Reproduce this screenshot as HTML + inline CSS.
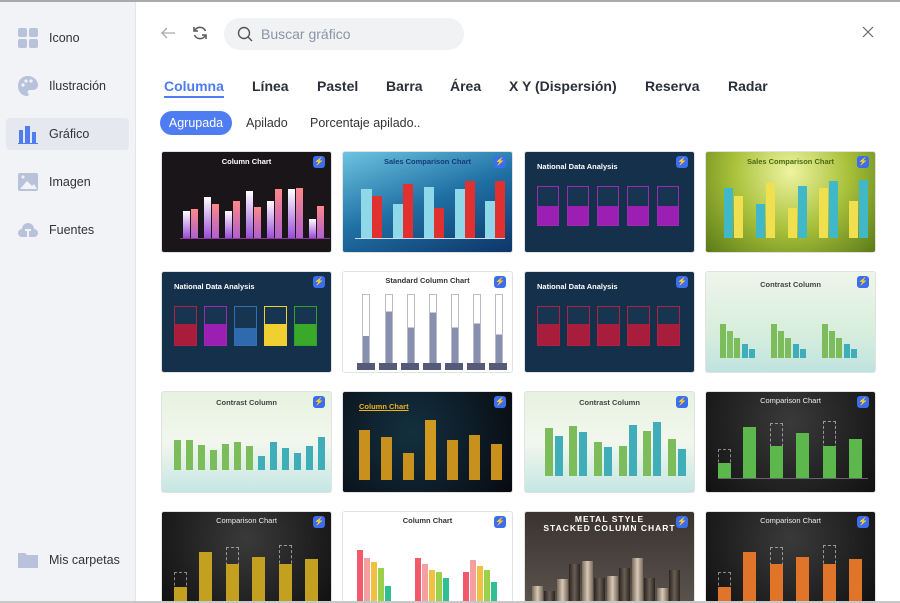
<!DOCTYPE html>
<html><head><meta charset="utf-8"><style>
*{margin:0;padding:0;box-sizing:border-box}
html,body{width:900px;height:603px;overflow:hidden}
body{background:#fff;font-family:"Liberation Sans",sans-serif;position:relative}
.top{position:absolute;left:0;top:0;width:900px;height:2px;background:#a9a9a9}
.side{position:absolute;left:0;top:2px;width:136px;height:601px;background:#f2f3f7;border-right:1px solid #e4e5ea}
.nav{position:absolute;left:6px;width:123px;height:32px;border-radius:4px;font-size:12.5px;color:#333;line-height:32px;padding-left:43px}
.nav.act{background:#e6e8ef}
.nav svg{position:absolute;left:12px;top:6px}
.tab{position:absolute;top:78px;font-size:14px;font-weight:bold;color:#2b2f3a}
.sub{position:absolute;top:111px;height:24px;line-height:24px;font-size:12.5px;color:#333}
.c{position:absolute;width:171px;height:102px;border-radius:3px;overflow:hidden;border:1px solid #e2e2e2}
.c i{position:absolute;display:block}
.t{position:absolute;left:0;width:100%;text-align:center;font-size:7.5px;font-weight:bold}
.bd{position:absolute;right:6px;top:4px;width:12px;height:12px;border-radius:3px;background:#3a6df0;color:#fff;font-size:8px;text-align:center;line-height:12px}
.r4{height:92px}
</style></head><body>
<div class="top"></div>
<div class="side">
 <div class="nav" style="top:20px"><svg width="20" height="20"><rect x="0" y="0" width="9" height="9" rx="2" fill="#b8c3db"/><rect x="11" y="0" width="9" height="9" rx="2" fill="#b8c3db"/><rect x="0" y="11" width="9" height="9" rx="2" fill="#b8c3db"/><rect x="11" y="11" width="9" height="9" rx="2" fill="#b8c3db"/></svg>Icono</div>
 <div class="nav" style="top:68px"><svg width="20" height="20"><path d="M10 0C4 0 0 4 0 10s4 10 9 10c2 0 2-2 1-3s0-3 2-3h3c3 0 5-2 5-5C20 4 15 0 10 0z" fill="#b8c3db"/><circle cx="5" cy="9" r="1.6" fill="#f2f3f7"/><circle cx="8" cy="5" r="1.6" fill="#f2f3f7"/><circle cx="13" cy="5" r="1.6" fill="#f2f3f7"/></svg>Ilustración</div>
 <div class="nav act" style="top:116px"><svg width="20" height="20"><rect x="1" y="6" width="4" height="13" fill="#4f7cf0"/><rect x="7" y="2" width="5" height="17" fill="#4f7cf0"/><rect x="14" y="8" width="4" height="11" fill="#4f7cf0"/><rect x="0" y="19" width="20" height="1" fill="#4f7cf0"/></svg>Gráfico</div>
 <div class="nav" style="top:164px"><svg width="20" height="20"><rect x="0" y="1" width="20" height="18" rx="2" fill="#b8c3db"/><path d="M2 17l7-8 5 5 2-2 3 5z" fill="#f2f3f7"/><circle cx="5" cy="5" r="1.5" fill="#f2f3f7"/></svg>Imagen</div>
 <div class="nav" style="top:212px"><svg width="20" height="20"><path d="M4 17a4 4 0 010-8 6 6 0 0112 0 4 4 0 010 8z" fill="#b8c3db"/><path d="M7 10h6M10 10v7" stroke="#f2f3f7" stroke-width="2"/></svg>Fuentes</div>
 <div class="nav" style="top:542px"><svg width="20" height="20"><path d="M0 3h7l2 2h11v13H0z" fill="#b8c3db"/></svg>Mis carpetas</div>
</div>
<svg style="position:absolute;left:160px;top:26px" width="16" height="14"><path d="M15 7H2M7 2L2 7l5 5" stroke="#aaa" stroke-width="1.3" fill="none"/></svg>
<svg style="position:absolute;left:192px;top:25px" width="16" height="16"><path d="M13.5 6A6 6 0 003 5M2.5 10a6 6 0 0010.5 1" stroke="#555" stroke-width="1.5" fill="none"/><path d="M2 2v4h4M14 14v-4h-4" stroke="#555" stroke-width="1.5" fill="none"/></svg>
<div style="position:absolute;left:224px;top:18px;width:240px;height:32px;border-radius:16px;background:#f1f2f4"></div>
<svg style="position:absolute;left:237px;top:26px" width="16" height="16"><circle cx="7" cy="7" r="5.5" stroke="#555" stroke-width="1.4" fill="none"/><path d="M11 11l4 4" stroke="#555" stroke-width="1.4"/></svg>
<div style="position:absolute;left:261px;top:26px;font-size:14px;color:#8a94a6">Buscar gráfico</div>
<svg style="position:absolute;left:862px;top:26px" width="12" height="12"><path d="M1 1l10 10M11 1L1 11" stroke="#667" stroke-width="1.2"/></svg>
<div class="tab" style="left:164px;color:#4f7cf0">Columna</div>
<div style="position:absolute;left:164px;top:96px;width:60px;height:2px;background:#4f7cf0"></div>
<div class="tab" style="left:252px">Línea</div>
<div class="tab" style="left:317px">Pastel</div>
<div class="tab" style="left:386px">Barra</div>
<div class="tab" style="left:450px">Área</div>
<div class="tab" style="left:509px">X Y (Dispersión)</div>
<div class="tab" style="left:645px">Reserva</div>
<div class="tab" style="left:728px">Radar</div>
<div class="sub" style="left:160px;width:72px;border-radius:12px;background:#4f7cf0;color:#fff;text-align:center">Agrupada</div>
<div class="sub" style="left:246px">Apilado</div>
<div class="sub" style="left:310px">Porcentaje apilado..</div>

<!-- Row 1 -->
<div class="c" style="left:161px;top:151px;background:#1a1519">
 <div class="t" style="top:5px;color:#fff">Column Chart</div><div class="bd">⚡</div>
 <i style="left:18px;bottom:13px;width:150px;height:1px;background:#8a3a9a"></i>
 <i style="left:21px;bottom:14px;width:7px;height:27px;background:linear-gradient(#fff,#9a4ed8)"></i><i style="left:29px;bottom:14px;width:7px;height:29px;background:linear-gradient(#f88,#b060d0)"></i>
 <i style="left:42px;bottom:14px;width:7px;height:41px;background:linear-gradient(#fff,#9a4ed8)"></i><i style="left:50px;bottom:14px;width:7px;height:34px;background:linear-gradient(#f88,#b060d0)"></i>
 <i style="left:63px;bottom:14px;width:7px;height:27px;background:linear-gradient(#fff,#9a4ed8)"></i><i style="left:71px;bottom:14px;width:7px;height:37px;background:linear-gradient(#f88,#b060d0)"></i>
 <i style="left:84px;bottom:14px;width:7px;height:47px;background:linear-gradient(#fff,#9a4ed8)"></i><i style="left:92px;bottom:14px;width:7px;height:31px;background:linear-gradient(#f88,#b060d0)"></i>
 <i style="left:105px;bottom:14px;width:7px;height:37px;background:linear-gradient(#fff,#9a4ed8)"></i><i style="left:113px;bottom:14px;width:7px;height:49px;background:linear-gradient(#f88,#b060d0)"></i>
 <i style="left:126px;bottom:14px;width:7px;height:49px;background:linear-gradient(#fff,#9a4ed8)"></i><i style="left:134px;bottom:14px;width:7px;height:50px;background:linear-gradient(#f88,#b060d0)"></i>
 <i style="left:147px;bottom:14px;width:7px;height:19px;background:linear-gradient(#fff,#9a4ed8)"></i><i style="left:155px;bottom:14px;width:7px;height:32px;background:linear-gradient(#f88,#b060d0)"></i>
</div>
<div class="c" style="left:342px;top:151px;background:linear-gradient(160deg,#6cc4e0,#1f6fa3 50%,#0e3568)">
 <div class="t" style="top:5px;color:#163a7a">Sales Comparison Chart</div><div class="bd">⚡</div>
 <i style="left:12px;bottom:13px;width:150px;height:1px;background:#cde"></i>
 <i style="left:18px;bottom:14px;width:11px;height:49px;background:#8fd8ea"></i><i style="left:29px;bottom:14px;width:10px;height:42px;background:#e03030"></i>
 <i style="left:50px;bottom:14px;width:10px;height:34px;background:#8fd8ea"></i><i style="left:60px;bottom:14px;width:10px;height:54px;background:#e03030"></i>
 <i style="left:81px;bottom:14px;width:10px;height:51px;background:#8fd8ea"></i><i style="left:91px;bottom:14px;width:10px;height:30px;background:#e03030"></i>
 <i style="left:112px;bottom:14px;width:10px;height:49px;background:#8fd8ea"></i><i style="left:122px;bottom:14px;width:10px;height:57px;background:#e03030"></i>
 <i style="left:142px;bottom:14px;width:10px;height:37px;background:#8fd8ea"></i><i style="left:152px;bottom:14px;width:10px;height:57px;background:#e03030"></i>
</div>
<div class="c" style="left:524px;top:151px;background:#15304a">
 <div class="t" style="top:10px;left:12px;text-align:left;color:#fff">National Data Analysis</div><div class="bd">⚡</div>
 <i style="left:12px;top:34px;width:22px;height:40px;border:1px solid #9c2ab0;background:linear-gradient(#173550 50%,#9c1fb4 50%)"></i>
 <i style="left:42px;top:34px;width:22px;height:40px;border:1px solid #9c2ab0;background:linear-gradient(#173550 50%,#9c1fb4 50%)"></i>
 <i style="left:72px;top:34px;width:22px;height:40px;border:1px solid #9c2ab0;background:linear-gradient(#173550 50%,#9c1fb4 50%)"></i>
 <i style="left:102px;top:34px;width:22px;height:40px;border:1px solid #9c2ab0;background:linear-gradient(#173550 50%,#9c1fb4 50%)"></i>
 <i style="left:132px;top:34px;width:22px;height:40px;border:1px solid #9c2ab0;background:linear-gradient(#173550 50%,#9c1fb4 50%)"></i>
</div>
<div class="c" style="left:705px;top:151px;background:radial-gradient(circle at 50% 20%,#eef4a0,#a8c03a 50%,#5a7a18)">
 <div class="t" style="top:5px;color:#4a6a10">Sales Comparison Chart</div><div class="bd">⚡</div>
 <i style="left:18px;bottom:14px;width:9px;height:50px;background:#40b8c8"></i><i style="left:28px;bottom:14px;width:9px;height:42px;background:#f0e050"></i>
 <i style="left:50px;bottom:14px;width:9px;height:34px;background:#40b8c8"></i><i style="left:60px;bottom:14px;width:9px;height:55px;background:#f0e050"></i>
 <i style="left:82px;bottom:14px;width:9px;height:30px;background:#f0e050"></i><i style="left:92px;bottom:14px;width:9px;height:52px;background:#40b8c8"></i>
 <i style="left:113px;bottom:14px;width:9px;height:50px;background:#f0e050"></i><i style="left:123px;bottom:14px;width:9px;height:57px;background:#40b8c8"></i>
 <i style="left:143px;bottom:14px;width:9px;height:37px;background:#f0e050"></i><i style="left:153px;bottom:14px;width:9px;height:58px;background:#40b8c8"></i>
</div>

<!-- Row 2 -->
<div class="c" style="left:161px;top:271px;background:#15304a">
 <div class="t" style="top:10px;left:12px;text-align:left;color:#fff">National Data Analysis</div><div class="bd">⚡</div>
 <i style="left:12px;top:34px;width:23px;height:40px;border:1px solid #b02040;background:linear-gradient(#173550 45%,#a81c3c 45%)"></i>
 <i style="left:42px;top:34px;width:23px;height:40px;border:1px solid #9c2ab0;background:linear-gradient(#173550 45%,#9c1fb4 45%)"></i>
 <i style="left:72px;top:34px;width:23px;height:40px;border:1px solid #3070b0;background:linear-gradient(#173550 55%,#2e6aad 55%)"></i>
 <i style="left:102px;top:34px;width:23px;height:40px;border:1px solid #f0d030;background:linear-gradient(#173550 45%,#f0d030 45%)"></i>
 <i style="left:132px;top:34px;width:23px;height:40px;border:1px solid #30a030;background:linear-gradient(#173550 45%,#3aa828 45%)"></i>
</div>
<div class="c" style="left:342px;top:271px;background:#fff">
 <div class="t" style="top:4px;color:#333">Standard Column Chart</div><div class="bd">⚡</div>
 <i style="left:19px;top:22px;width:8px;height:70px;border:1px solid #bbc;background:linear-gradient(transparent 60%,#8890b0 60%)"></i>
 <i style="left:42px;top:22px;width:8px;height:70px;border:1px solid #bbc;background:linear-gradient(transparent 24%,#8890b0 24%)"></i>
 <i style="left:64px;top:22px;width:8px;height:70px;border:1px solid #bbc;background:linear-gradient(transparent 48%,#8890b0 48%)"></i>
 <i style="left:86px;top:22px;width:8px;height:70px;border:1px solid #bbc;background:linear-gradient(transparent 26%,#8890b0 26%)"></i>
 <i style="left:108px;top:22px;width:8px;height:70px;border:1px solid #bbc;background:linear-gradient(transparent 48%,#8890b0 48%)"></i>
 <i style="left:130px;top:22px;width:8px;height:70px;border:1px solid #bbc;background:linear-gradient(transparent 42%,#8890b0 42%)"></i>
 <i style="left:152px;top:22px;width:8px;height:70px;border:1px solid #bbc;background:linear-gradient(transparent 58%,#8890b0 58%)"></i>
 <i style="left:14px;top:91px;width:152px;height:7px;background:repeating-linear-gradient(90deg,#555a78 0 18px,transparent 18px 22px)"></i>
</div>
<div class="c" style="left:524px;top:271px;background:#15304a">
 <div class="t" style="top:10px;left:12px;text-align:left;color:#fff">National Data Analysis</div><div class="bd">⚡</div>
 <i style="left:12px;top:34px;width:23px;height:40px;border:1px solid #b02040;background:linear-gradient(#173550 45%,#a81c3c 45%)"></i>
 <i style="left:42px;top:34px;width:23px;height:40px;border:1px solid #b02040;background:linear-gradient(#173550 45%,#a81c3c 45%)"></i>
 <i style="left:72px;top:34px;width:23px;height:40px;border:1px solid #b02040;background:linear-gradient(#173550 45%,#a81c3c 45%)"></i>
 <i style="left:102px;top:34px;width:23px;height:40px;border:1px solid #b02040;background:linear-gradient(#173550 45%,#a81c3c 45%)"></i>
 <i style="left:132px;top:34px;width:23px;height:40px;border:1px solid #b02040;background:linear-gradient(#173550 45%,#a81c3c 45%)"></i>
</div>
<div class="c" style="left:705px;top:271px;background:linear-gradient(#eef5ea,#d8eedd 60%,#bfe3e0)">
 <div class="t" style="top:8px;color:#444">Contrast Column</div><div class="bd">⚡</div>
 <i style="left:14px;bottom:14px;width:6px;height:34px;background:#7cbc5a"></i><i style="left:21px;bottom:14px;width:6px;height:27px;background:#80c060"></i><i style="left:28px;bottom:14px;width:6px;height:20px;background:#7cbc5a"></i><i style="left:36px;bottom:14px;width:6px;height:14px;background:#40aeb8"></i><i style="left:43px;bottom:14px;width:6px;height:9px;background:#40aeb8"></i>
 <i style="left:65px;bottom:14px;width:6px;height:34px;background:#7cbc5a"></i><i style="left:72px;bottom:14px;width:6px;height:27px;background:#7cbc5a"></i><i style="left:79px;bottom:14px;width:6px;height:20px;background:#7cbc5a"></i><i style="left:87px;bottom:14px;width:6px;height:14px;background:#40aeb8"></i><i style="left:94px;bottom:14px;width:6px;height:9px;background:#40aeb8"></i>
 <i style="left:116px;bottom:14px;width:6px;height:34px;background:#7cbc5a"></i><i style="left:123px;bottom:14px;width:6px;height:27px;background:#7cbc5a"></i><i style="left:130px;bottom:14px;width:6px;height:20px;background:#7cbc5a"></i><i style="left:138px;bottom:14px;width:6px;height:14px;background:#40aeb8"></i><i style="left:145px;bottom:14px;width:6px;height:9px;background:#40aeb8"></i>
</div>

<!-- Row 3 -->
<div class="c" style="left:161px;top:391px;background:linear-gradient(#e6f2df,#f2f7ee 50%,#c6e6e3)">
 <div class="t" style="top:6px;color:#444">Contrast Column</div><div class="bd">⚡</div>
 <i style="left:12px;bottom:22px;width:7px;height:30px;background:#7cbc5a"></i><i style="left:24px;bottom:22px;width:7px;height:30px;background:#7cbc5a"></i><i style="left:36px;bottom:22px;width:7px;height:25px;background:#7cbc5a"></i><i style="left:48px;bottom:22px;width:7px;height:20px;background:#7cbc5a"></i><i style="left:60px;bottom:22px;width:7px;height:26px;background:#7cbc5a"></i><i style="left:72px;bottom:22px;width:7px;height:28px;background:#7cbc5a"></i><i style="left:84px;bottom:22px;width:7px;height:24px;background:#7cbc5a"></i><i style="left:96px;bottom:22px;width:7px;height:14px;background:#40aeb8"></i><i style="left:108px;bottom:22px;width:7px;height:28px;background:#40aeb8"></i><i style="left:120px;bottom:22px;width:7px;height:22px;background:#40aeb8"></i><i style="left:132px;bottom:22px;width:7px;height:17px;background:#40aeb8"></i><i style="left:144px;bottom:22px;width:7px;height:24px;background:#40aeb8"></i><i style="left:156px;bottom:22px;width:7px;height:33px;background:#40aeb8"></i>
</div>
<div class="c" style="left:342px;top:391px;background:radial-gradient(circle at 40% 40%,#133040,#080a10)">
 <div class="t" style="top:10px;left:16px;text-align:left;color:#f0b020;text-decoration:underline">Column Chart</div><div class="bd">⚡</div>
 <i style="left:16px;bottom:12px;width:11px;height:50px;background:#c8901c"></i><i style="left:38px;bottom:12px;width:11px;height:43px;background:#c8901c"></i><i style="left:60px;bottom:12px;width:11px;height:27px;background:#c8901c"></i><i style="left:82px;bottom:12px;width:11px;height:60px;background:#d09a20"></i><i style="left:104px;bottom:12px;width:11px;height:40px;background:#c8901c"></i><i style="left:126px;bottom:12px;width:11px;height:45px;background:#c8901c"></i><i style="left:148px;bottom:12px;width:11px;height:36px;background:#c8901c"></i>
</div>
<div class="c" style="left:524px;top:391px;background:linear-gradient(#e6f2df,#f2f7ee 50%,#c6e6e3)">
 <div class="t" style="top:6px;color:#444">Contrast Column</div><div class="bd">⚡</div>
 <i style="left:20px;bottom:16px;width:8px;height:48px;background:#7cbc5a"></i><i style="left:30px;bottom:16px;width:8px;height:40px;background:#40aeb8"></i>
 <i style="left:44px;bottom:16px;width:8px;height:50px;background:#7cbc5a"></i><i style="left:54px;bottom:16px;width:8px;height:44px;background:#40aeb8"></i>
 <i style="left:69px;bottom:16px;width:8px;height:34px;background:#7cbc5a"></i><i style="left:79px;bottom:16px;width:8px;height:29px;background:#40aeb8"></i>
 <i style="left:94px;bottom:16px;width:8px;height:30px;background:#7cbc5a"></i><i style="left:104px;bottom:16px;width:8px;height:51px;background:#40aeb8"></i>
 <i style="left:118px;bottom:16px;width:8px;height:45px;background:#7cbc5a"></i><i style="left:128px;bottom:16px;width:8px;height:54px;background:#40aeb8"></i>
 <i style="left:143px;bottom:16px;width:8px;height:37px;background:#7cbc5a"></i><i style="left:153px;bottom:16px;width:8px;height:27px;background:#40aeb8"></i>
</div>
<div class="c" style="left:705px;top:391px;background:radial-gradient(circle at 50% 30%,#3a3a3a,#111)">
 <div class="t" style="top:4px;color:#eee;font-weight:normal">Comparison Chart</div><div class="bd">⚡</div>
 <i style="left:12px;bottom:13px;width:150px;height:1px;background:#666"></i>
 <i style="left:12px;bottom:14px;width:13px;height:29px;border:1px dashed #888"></i><i style="left:12px;bottom:14px;width:13px;height:15px;background:#5cb84c"></i>
 <i style="left:37px;bottom:14px;width:13px;height:51px;background:#5cb84c"></i>
 <i style="left:64px;bottom:14px;width:13px;height:55px;border:1px dashed #999"></i><i style="left:64px;bottom:14px;width:13px;height:32px;background:#5cb84c"></i>
 <i style="left:90px;bottom:14px;width:13px;height:45px;background:#5cb84c"></i>
 <i style="left:117px;bottom:14px;width:13px;height:57px;border:1px dashed #999"></i><i style="left:117px;bottom:14px;width:13px;height:32px;background:#5cb84c"></i>
 <i style="left:143px;bottom:14px;width:13px;height:39px;background:#5cb84c"></i>
</div>

<!-- Row 4 -->
<div class="c r4" style="left:161px;top:511px;background:radial-gradient(circle at 50% 30%,#3a3a3a,#111)">
 <div class="t" style="top:4px;color:#eee;font-weight:normal">Comparison Chart</div><div class="bd">⚡</div>
 <i style="left:12px;top:60px;width:13px;height:40px;border:1px dashed #888"></i><i style="left:12px;top:75px;width:13px;height:30px;background:#c4a020"></i>
 <i style="left:37px;top:40px;width:13px;height:60px;background:#c4a020"></i>
 <i style="left:64px;top:35px;width:13px;height:70px;border:1px dashed #999"></i><i style="left:64px;top:52px;width:13px;height:50px;background:#c4a020"></i>
 <i style="left:90px;top:45px;width:13px;height:60px;background:#c4a020"></i>
 <i style="left:117px;top:33px;width:13px;height:70px;border:1px dashed #999"></i><i style="left:117px;top:52px;width:13px;height:50px;background:#c4a020"></i>
 <i style="left:143px;top:47px;width:13px;height:60px;background:#c4a020"></i>
</div>
<div class="c r4" style="left:342px;top:511px;background:#fff">
 <div class="t" style="top:4px;color:#333">Column Chart</div><div class="bd">⚡</div>
 <i style="left:14px;top:38px;width:6px;height:70px;background:#f05a6a"></i><i style="left:21px;top:46px;width:6px;height:60px;background:#f5a0a0"></i><i style="left:28px;top:50px;width:6px;height:60px;background:#f0c040"></i><i style="left:35px;top:56px;width:6px;height:60px;background:#9ad04a"></i><i style="left:42px;top:74px;width:6px;height:60px;background:#30c090"></i>
 <i style="left:72px;top:46px;width:6px;height:70px;background:#f05a6a"></i><i style="left:79px;top:52px;width:6px;height:60px;background:#f5a0a0"></i><i style="left:86px;top:58px;width:6px;height:60px;background:#f0c040"></i><i style="left:93px;top:60px;width:6px;height:60px;background:#9ad04a"></i><i style="left:100px;top:66px;width:6px;height:60px;background:#30c090"></i>
 <i style="left:120px;top:60px;width:6px;height:70px;background:#f05a6a"></i><i style="left:127px;top:48px;width:6px;height:60px;background:#f5a0a0"></i><i style="left:134px;top:54px;width:6px;height:60px;background:#f0c040"></i><i style="left:141px;top:58px;width:6px;height:60px;background:#9ad04a"></i><i style="left:148px;top:70px;width:6px;height:60px;background:#30c090"></i>
</div>
<div class="c r4" style="left:524px;top:511px;background:linear-gradient(#3a3330,#5a524c)">
 <div class="t" style="top:3px;color:#fff;font-size:8.5px;letter-spacing:1px;line-height:9px">METAL STYLE<br>STACKED COLUMN CHART</div><div class="bd">⚡</div>
 <i style="left:7px;top:74px;width:11px;height:30px;background:linear-gradient(90deg,#7a6a5a,#d8c8b8,#7a6a5a)"></i><i style="left:19px;top:79px;width:11px;height:30px;background:linear-gradient(90deg,#2a2420,#6a5e54,#2a2420)"></i>
 <i style="left:32px;top:67px;width:11px;height:40px;background:linear-gradient(90deg,#7a6a5a,#d8c8b8,#7a6a5a)"></i><i style="left:44px;top:52px;width:11px;height:60px;background:linear-gradient(90deg,#2a2420,#6a5e54,#2a2420)"></i>
 <i style="left:57px;top:49px;width:11px;height:60px;background:linear-gradient(90deg,#7a6a5a,#d8c8b8,#7a6a5a)"></i><i style="left:69px;top:66px;width:11px;height:40px;background:linear-gradient(90deg,#2a2420,#6a5e54,#2a2420)"></i>
 <i style="left:82px;top:64px;width:11px;height:40px;background:linear-gradient(90deg,#7a6a5a,#d8c8b8,#7a6a5a)"></i><i style="left:94px;top:56px;width:11px;height:60px;background:linear-gradient(90deg,#2a2420,#6a5e54,#2a2420)"></i>
 <i style="left:107px;top:46px;width:11px;height:60px;background:linear-gradient(90deg,#7a6a5a,#d8c8b8,#7a6a5a)"></i><i style="left:119px;top:66px;width:11px;height:40px;background:linear-gradient(90deg,#2a2420,#6a5e54,#2a2420)"></i>
 <i style="left:132px;top:76px;width:11px;height:30px;background:linear-gradient(90deg,#7a6a5a,#d8c8b8,#7a6a5a)"></i><i style="left:144px;top:58px;width:11px;height:50px;background:linear-gradient(90deg,#2a2420,#6a5e54,#2a2420)"></i>
</div>
<div class="c r4" style="left:705px;top:511px;background:radial-gradient(circle at 50% 30%,#3a3a3a,#111)">
 <div class="t" style="top:4px;color:#eee;font-weight:normal">Comparison Chart</div><div class="bd">⚡</div>
 <i style="left:12px;top:60px;width:13px;height:40px;border:1px dashed #888"></i><i style="left:12px;top:75px;width:13px;height:30px;background:#e07428"></i>
 <i style="left:37px;top:40px;width:13px;height:60px;background:#e07428"></i>
 <i style="left:64px;top:35px;width:13px;height:70px;border:1px dashed #999"></i><i style="left:64px;top:52px;width:13px;height:50px;background:#e07428"></i>
 <i style="left:90px;top:45px;width:13px;height:60px;background:#e07428"></i>
 <i style="left:117px;top:33px;width:13px;height:70px;border:1px dashed #999"></i><i style="left:117px;top:52px;width:13px;height:50px;background:#e07428"></i>
 <i style="left:143px;top:47px;width:13px;height:60px;background:#e07428"></i>
</div>
<div style="position:absolute;left:0;top:601px;width:900px;height:2px;background:#c8c8c8"></div>
</body></html>
